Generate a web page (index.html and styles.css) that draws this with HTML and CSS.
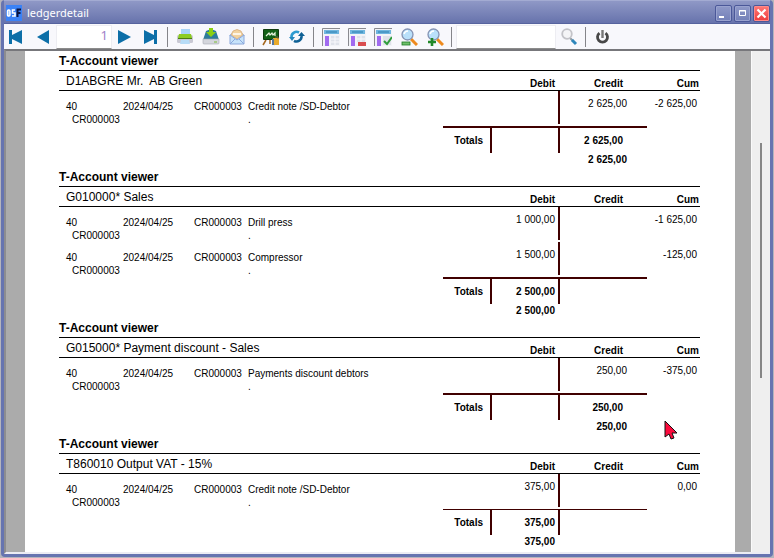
FILE: index.html
```html
<!DOCTYPE html>
<html lang="en">
<head>
<meta charset="utf-8">
<title>ledgerdetail</title>
<link rel="stylesheet" href="styles.css">
</head>
<body>
<div class="window">
  <header class="titlebar">
    <svg class="app-icon" viewBox="0 0 16 16" aria-hidden="true">
      <rect width="16" height="16" fill="#3b82f6"/>
      <rect x="1.500" y="5" width="2.500" height="6" rx="1" fill="#9cc3fb" stroke="#fff" stroke-width="1.400"/>
      <path d="M9 5H6.500v3H9v3H6" fill="none" stroke="#fff" stroke-width="1.600"/>
      <path d="M11.500 12V4.500H15M11.500 8H14.500" fill="none" stroke="#0a1440" stroke-width="2"/>
    </svg>
    <h1 class="caption">ledgerdetail</h1>
    <button class="win-btn" aria-label="Minimize"><svg viewBox="0 0 15 15"><path d="M3 11h5" stroke="#fff" stroke-width="2"/></svg></button>
    <button class="win-btn" aria-label="Maximize"><svg viewBox="0 0 15 15"><path d="M4.500 4.500h6v5h-6zM4 5h7" fill="none" stroke="#fff"/></svg></button>
    <button class="win-btn close" aria-label="Close"><svg viewBox="0 0 15 15"><path d="M3.500 3.500l8 8M11.500 3.500l-8 8" stroke="#fff" stroke-width="2.200"/></svg></button>
  </header>

  <div class="toolbar" role="toolbar">
    <button class="tool first" aria-label="First page"><svg viewBox="0 0 18 18"><path d="M2 2h3v5L15 2v14L5 11v5H2z" fill="#0d6fa8"/></svg></button>
    <button class="tool prev" aria-label="Previous page"><svg viewBox="0 0 18 18"><path d="M16 2v14L4 9z" fill="#0d6fa8"/></svg></button>
    <input class="field page-no" type="text" value="1" aria-label="Page">
    <button class="tool" aria-label="Next page"><svg viewBox="0 0 18 18"><path d="M2 2v14l13-7z" fill="#0d6fa8"/></svg></button>
    <button class="tool" aria-label="Last page"><svg viewBox="0 0 18 18"><path d="M15 2h-3v5L2 2v14l10-5v5h3z" fill="#0d6fa8"/></svg></button>
    <span class="sep"></span>
    <button class="tool" aria-label="Print"><svg viewBox="0 0 18 18">
      <path d="M5 1h9v7H5z" fill="#a9d4f7"/><rect x="1" y="7" width="16" height="8" rx="1.500" fill="#c9c9d4"/>
      <path d="M3 6h12l1 4H2z" fill="#8ccc22"/><path d="M2 10h14v1H2z" fill="#4b7d13"/><path d="M5 12h8l1 4H4z" fill="#b7dcf7"/></svg></button>
    <button class="tool" aria-label="Save"><svg viewBox="0 0 18 18">
      <path d="M4 3q5-3 10 0l3 9H1z" fill="#2d7b9b"/><path d="M1 11h16v4q0 1-1 1H2q-1 0-1-1z" fill="#d4d6dd" stroke="#a6a9b3" stroke-width=".6"/>
      <path d="M7 0h4v4h3L9 9 4 4h3z" fill="#8bd011"/><path d="M12 14h3" stroke="#7bbd35"/></svg></button>
    <button class="tool" aria-label="Mail"><svg viewBox="0 0 18 18">
      <path d="M2 7l7-5 7 5v1L9 13 2 8z" fill="#dbe8fb" stroke="#93aedb" stroke-width=".8"/><path d="M5 3q4-3 8 0l2 4-6 4-6-4z" fill="#f2d3a0" stroke="#cf9c65" stroke-width=".6"/>
      <path d="M5 6h8" stroke="#fff" stroke-width="1.500"/><path d="M2 7l7 5 7-5v9H2z" fill="#c7e3fa" stroke="#8ba8dc"/><path d="M2 16l5-5M16 16l-5-5" stroke="#8ba8dc"/></svg></button>
    <span class="sep"></span>
    <button class="tool" aria-label="Design"><svg viewBox="0 0 18 18">
      <path d="M4 12l-3 5M12 12l1 5M8 12v4" stroke="#a4671d" stroke-width="1.500"/><path d="M1.500 1.500h15v10h-15z" fill="#126016" stroke="#103c10"/>
      <path d="M4 8l3-3 1 2 2-2 1 2 2-2v3" fill="none" stroke="#e8f5df" stroke-width="1.200"/><rect x="11" y="10" width="6" height="7" fill="#e9aa2b"/><rect x="10" y="11" width="2" height="6" fill="#57789e"/><path d="M13 9h3v2" fill="none" stroke="#776442"/></svg></button>
    <button class="tool" aria-label="Refresh"><svg viewBox="0 0 18 18">
      <path d="M3.500 9A5 5 0 0 1 11 4.500" fill="none" stroke="#2d9bd0" stroke-width="2.600"/><path d="M13.500 8A5 5 0 0 1 6 12.800" fill="none" stroke="#0f6095" stroke-width="2.600"/>
      <path d="M10 8h7l-3.500-4z" fill="#0f6095"/><path d="M1 9h6l-3 4z" fill="#2587bd"/></svg></button>
    <span class="sep"></span>
    <button class="tool" aria-label="Layout"><svg viewBox="0 0 18 18">
      <path d="M0 0h18v18H0z" fill="#f2f3f7"/><path d="M.5 18V.5H18" fill="none" stroke="#8a8a90"/><path d="M2 2h15v4H2z" fill="#6fb6df"/><path d="M4 4h11" stroke="#2b7cae"/>
      <path d="M3 8h4v10H3z" fill="#a16bf0"/><path d="M9 8h8v9H9z" fill="#dfe2ea"/><path d="M9 11h8M9 14h8M13 8v9" stroke="#f8f8fc"/></svg></button>
    <button class="tool" aria-label="Remove layout"><svg viewBox="0 0 18 18">
      <path d="M0 0h18v18H0z" fill="#f2f3f7"/><path d="M.5 18V.5H18" fill="none" stroke="#8a8a90"/><path d="M2 2h15v4H2z" fill="#6fb6df"/><path d="M4 4h11" stroke="#2b7cae"/>
      <path d="M3 8h4v10H3z" fill="#a16bf0"/><path d="M9 8h8v6H9z" fill="#dfe2ea"/><path d="M9 11h8M13 8v6" stroke="#f8f8fc"/><path d="M10 14h8v4h-8z" fill="#d94d50"/></svg></button>
    <button class="tool" aria-label="Apply layout"><svg viewBox="0 0 18 18">
      <path d="M0 0h18v18H0z" fill="#f2f3f7"/><path d="M.5 18V.5H18" fill="none" stroke="#8a8a90"/><path d="M2 2h15v4H2z" fill="#6fb6df"/><path d="M4 4h11" stroke="#2b7cae"/>
      <path d="M3 8h4v10H3z" fill="#a16bf0"/><path d="M9 8h8v9H9z" fill="#dfe2ea"/><path d="M10 13l3 3 5-7" fill="none" stroke="#2f9d3c" stroke-width="2"/></svg></button>
    <button class="tool" aria-label="Zoom out"><svg viewBox="0 0 18 18">
      <path d="M11 11l6 6" stroke="#ee8a1e" stroke-width="3"/><circle cx="7.500" cy="6.500" r="5.500" fill="#b9e0fa" stroke="#8593b3" stroke-width="1.300"/><path d="M4 6q1-3 4-3" stroke="#fff" stroke-width="1.500" fill="none"/>
      <rect x="2" y="14" width="8" height="3" fill="#6fc06a" stroke="#1f7b26" stroke-width=".8"/></svg></button>
    <button class="tool" aria-label="Zoom in"><svg viewBox="0 0 18 18">
      <path d="M11 11l6 6" stroke="#ee8a1e" stroke-width="3"/><circle cx="7.500" cy="6.500" r="5.500" fill="#b9e0fa" stroke="#8593b3" stroke-width="1.300"/><path d="M4 6q1-3 4-3" stroke="#fff" stroke-width="1.500" fill="none"/>
      <path d="M2 14h8M6 10v8" stroke="#23892a" stroke-width="2.600"/></svg></button>
    <span class="sep"></span>
    <input class="field search" type="text" aria-label="Search text">
    <button class="tool" aria-label="Find"><svg viewBox="0 0 18 18">
      <path d="M10 10l3 3" stroke="#8b9aa5" stroke-width="2"/><path d="M12 12l4 4" stroke="#2f87bb" stroke-width="3"/><circle cx="7" cy="6" r="4.800" fill="#f4f4f6" stroke="#c3c3c8" stroke-width="1.800"/></svg></button>
    <span class="sep"></span>
    <button class="tool" aria-label="Exit"><svg viewBox="0 0 18 18">
      <path d="M5.500 5.200a5 5 0 1 0 6 0" fill="none" stroke="#484848" stroke-width="2.800"/><path d="M8.500 2v8" stroke="#777" stroke-width="2.400"/></svg></button>
  </div>

  <div class="viewport">
    <main class="paper">
      <section class="account">
        <h2>T-Account viewer</h2>
        <table>
          <colgroup><col class="c-no"><col class="c-date"><col class="c-ref"><col><col class="c-label"><col class="c-debit"><col class="c-credit"><col class="c-cum"></colgroup>
          <thead><tr><th class="name" colspan="5">D1ABGRE Mr.&nbsp; AB Green</th><th class="debit">Debit</th><th class="credit">Credit</th><th class="cum">Cum</th></tr></thead>
          <tbody>
            <tr><td class="no">40<span>CR000003</span></td><td>2024/04/25</td><td>CR000003</td><td colspan="2">Credit note /SD-Debtor<br>.</td><td class="debit"></td><td class="credit bar">2 625,00</td><td class="cum">-2 625,00</td></tr>
          </tbody>
          <tfoot>
            <tr class="totals"><td colspan="4"></td><th class="label">Totals</th><td class="debit bar"></td><td class="credit bar">2 625,00</td><td></td></tr>
            <tr class="balance"><td colspan="5"></td><td class="debit"></td><td class="credit">2 625,00</td><td></td></tr>
          </tfoot>
        </table>
      </section>

      <section class="account">
        <h2>T-Account viewer</h2>
        <table>
          <colgroup><col class="c-no"><col class="c-date"><col class="c-ref"><col><col class="c-label"><col class="c-debit"><col class="c-credit"><col class="c-cum"></colgroup>
          <thead><tr><th class="name" colspan="5">G010000* Sales</th><th class="debit">Debit</th><th class="credit">Credit</th><th class="cum">Cum</th></tr></thead>
          <tbody>
            <tr><td class="no">40<span>CR000003</span></td><td>2024/04/25</td><td>CR000003</td><td colspan="2">Drill press<br>.</td><td class="debit">1 000,00</td><td class="credit bar"></td><td class="cum">-1 625,00</td></tr>
            <tr><td class="no">40<span>CR000003</span></td><td>2024/04/25</td><td>CR000003</td><td colspan="2">Compressor<br>.</td><td class="debit">1 500,00</td><td class="credit bar"></td><td class="cum">-125,00</td></tr>
          </tbody>
          <tfoot>
            <tr class="totals"><td colspan="4"></td><th class="label">Totals</th><td class="debit bar">2 500,00</td><td class="credit bar"></td><td></td></tr>
            <tr class="balance"><td colspan="5"></td><td class="debit">2 500,00</td><td class="credit"></td><td></td></tr>
          </tfoot>
        </table>
      </section>

      <section class="account">
        <h2>T-Account viewer</h2>
        <table>
          <colgroup><col class="c-no"><col class="c-date"><col class="c-ref"><col><col class="c-label"><col class="c-debit"><col class="c-credit"><col class="c-cum"></colgroup>
          <thead><tr><th class="name" colspan="5">G015000* Payment discount - Sales</th><th class="debit">Debit</th><th class="credit">Credit</th><th class="cum">Cum</th></tr></thead>
          <tbody>
            <tr><td class="no">40<span>CR000003</span></td><td>2024/04/25</td><td>CR000003</td><td colspan="2">Payments discount debtors<br>.</td><td class="debit"></td><td class="credit bar">250,00</td><td class="cum">-375,00</td></tr>
          </tbody>
          <tfoot>
            <tr class="totals"><td colspan="4"></td><th class="label">Totals</th><td class="debit bar"></td><td class="credit bar">250,00</td><td></td></tr>
            <tr class="balance"><td colspan="5"></td><td class="debit"></td><td class="credit">250,00</td><td></td></tr>
          </tfoot>
        </table>
      </section>

      <section class="account">
        <h2>T-Account viewer</h2>
        <table>
          <colgroup><col class="c-no"><col class="c-date"><col class="c-ref"><col><col class="c-label"><col class="c-debit"><col class="c-credit"><col class="c-cum"></colgroup>
          <thead><tr><th class="name" colspan="5">T860010 Output VAT - 15%</th><th class="debit">Debit</th><th class="credit">Credit</th><th class="cum">Cum</th></tr></thead>
          <tbody>
            <tr><td class="no">40<span>CR000003</span></td><td>2024/04/25</td><td>CR000003</td><td colspan="2">Credit note /SD-Debtor<br>.</td><td class="debit">375,00</td><td class="credit bar"></td><td class="cum">0,00</td></tr>
          </tbody>
          <tfoot>
            <tr class="totals thin"><td colspan="4"></td><th class="label">Totals</th><td class="debit bar">375,00</td><td class="credit bar"></td><td></td></tr>
            <tr class="balance"><td colspan="5"></td><td class="debit">375,00</td><td class="credit"></td><td></td></tr>
          </tfoot>
        </table>
      </section>
    </main>
    <div class="scrollbar"><div class="thumb"></div></div>
  </div>
</div>
<svg class="pointer" viewBox="0 0 14 20" aria-hidden="true"><path d="M1 1v16l4-3 2 5 3-1-2-5h5z" fill="#fb0a3c" stroke="#111"/></svg>
</body>
</html>
```
FILE: styles.css
```css
* { box-sizing: border-box; }

body {
  margin: 0;
  height: 100vh;
  padding: 0 1px 1px 1px;
  background: #b4b4bc;
  font-family: "Liberation Sans", Arial, sans-serif;
  overflow: hidden;
}

.window {
  display: flex;
  flex-direction: column;
  height: 100%;
  border: 3px solid #6674b0;
  border-top: 0;
  border-radius: 4px;
  background: #f8f8fc;
}

.titlebar {
  display: flex;
  align-items: center;
  gap: 2px;
  height: 24px;
  flex: none;
  padding: 2px 0 0 2px;
  border-top: 1px solid #a3abd2;
  border-bottom: 1px solid #56639e;
  background: linear-gradient(#8f98c6, #6773ac);
}

.app-icon { width: 16px; height: 16px; }

.caption {
  flex: 1;
  margin: 0;
  padding-left: 3px;
  color: #fff;
  font: 11px/20px "Noto Sans", sans-serif;
}

.win-btn {
  width: 17px;
  height: 17px;
  padding: 0;
  border: 1px solid #4b5899;
  border-radius: 2px;
  background: linear-gradient(#8f99c8, #7380b8);
  box-shadow: inset 0 0 0 1px #99a2cf;
}

.win-btn.close {
  background: linear-gradient(#ff7a78, #ee3b3b);
  box-shadow: inset 0 0 0 1px #ff8a88;
}

.win-btn svg { display: block; width: 15px; height: 15px; }

.toolbar {
  display: flex;
  align-items: center;
  flex: none;
  height: 25px;
}

.tool {
  width: 26px;
  height: 24px;
  flex: none;
  padding: 0;
  border: 0;
  background: none;
}

.tool.first { width: 24px; }
.tool.prev { width: 28px; }
.tool svg { display: block; width: 18px; height: 18px; margin: auto; }

.sep {
  width: 1px;
  height: 20px;
  flex: none;
  margin: 0 4px 0 3px;
  background: #85858a;
}

.field {
  height: 24px;
  border: 1px solid #ededf2;
  border-bottom-color: #8c8c8c;
  background: #fff;
  font: 13px/18px "Noto Sans", sans-serif;
}

.page-no {
  width: 56px;
  padding: 0 3px 3px 0;
  color: #a07fc8;
  text-align: right;
}

.search { width: 100px; }

.viewport {
  display: flex;
  flex: 1;
  min-height: 0;
  border-top: 2px solid #77777b;
  border-bottom: 2px solid #ececf4;
  border-left: 2px solid #8c8c90;
  background: #ababab;
}

.paper {
  flex: 1;
  margin: 0 16px 0 19px;
  padding: 1px 35px 0 34px;
  overflow: hidden;
  background: #fff;
  color: #000;
}

.scrollbar {
  width: 19px;
  border-left: 1px solid #fafafa;
  background: #efefef;
}

.thumb {
  width: 2px;
  height: 47%;
  margin: 92px auto 0 8px;
  background: #868686;
}

.account h2 {
  margin: 0;
  font-size: 12px;
  line-height: 18px;
}

.account table {
  width: 100%;
  table-layout: fixed;
  border-collapse: separate;
  border-spacing: 0;
  font-size: 10px;
  line-height: 13px;
}

.c-no { width: 64px; }
.c-date { width: 71px; }
.c-ref { width: 54px; }
.c-label { width: 47px; }
.c-debit { width: 68px; }
.c-credit { width: 89px; }
.c-cum { width: 53px; }

th, td { padding: 0; white-space: nowrap; }

thead th {
  border: solid #000;
  border-width: 1px 0;
  vertical-align: bottom;
}

thead .name {
  padding: 2px 0 0 7px;
  font-size: 12px;
  font-weight: normal;
  line-height: 17px;
  text-align: left;
}

tbody td { padding-top: 9px; vertical-align: top; }
.no { padding-left: 7px; }
.no span { display: block; padding-left: 6px; }

.debit, .credit, .cum { text-align: right; }
tbody .debit, tbody .credit, tbody .cum { padding-top: 6px; }
.debit { padding-right: 3px; }
.credit { padding-right: 20px; }
tbody .cum { padding-right: 3px; }
thead .cum { padding-right: 1px; }
thead .credit, .totals .credit { padding-right: 24px; }

.bar { background: linear-gradient(#400000, #400000) left top / 2px calc(100% - 2px) no-repeat; }

.totals th, .totals td { line-height: 25px; font-weight: bold; }
.totals .label, .totals .bar { border-top: 2px solid #400000; }
.totals.thin .label, .totals.thin .bar { border-top-width: 1px; }
.totals .bar { background-size: 2px 100%; }
.label { padding-right: 7px; text-align: right; }
.balance td { height: 15px; font-weight: bold; vertical-align: top; }

.pointer {
  position: fixed;
  left: 664px;
  top: 420px;
  width: 14px;
  height: 20px;
  pointer-events: none;
}
```
